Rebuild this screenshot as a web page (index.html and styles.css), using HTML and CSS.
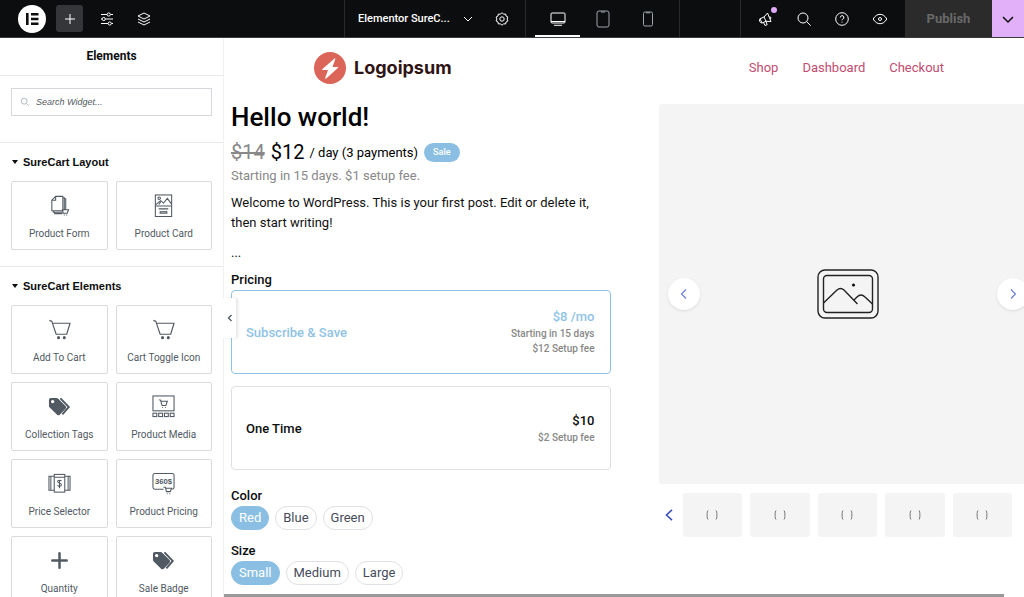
FILE: index.html
```html
<!DOCTYPE html>
<html lang="en">
<head>
<meta charset="utf-8">
<title>Elementor SureCart</title>
<link rel="stylesheet" href="styles.css">
</head>
<body>
<svg class="defs" aria-hidden="true">
  <symbol id="cart" viewBox="0 0 24 24"><path d="M1.500 2.500 4 3.500l4.500 13.500h11L23 5.500H5" fill="none" stroke="currentColor" stroke-width="1.200" stroke-linejoin="round"/><circle cx="11" cy="20.500" r="1.600" fill="currentColor"/><circle cx="17" cy="20.500" r="1.600" fill="currentColor"/></symbol>
  <symbol id="tags" viewBox="0 0 24 24"><path fill="currentColor" fill-rule="evenodd" d="M1 5a2 2 0 0 1 2-2h6a2 2 0 0 1 1.400.6l7.900 7.900a2 2 0 0 1 0 2.800l-6 6.200a2 2 0 0 1-2.800 0L1.500 12.700A2 2 0 0 1 1 11.300zM4.900 8.700a1.800 1.800 0 1 0 0-3.600 1.800 1.800 0 0 0 0 3.600z"/><path d="m13 3.500 8.700 9L15 20.300" fill="none" stroke="currentColor" stroke-width="2"/></symbol>
</svg>

<header class="topbar">
  <div class="tools">
    <button class="brand" aria-label="Elementor menu"><svg viewBox="0 0 28 28"><circle cx="14" cy="14" r="14" fill="#fff"/><path d="M8 8h2.600v12H8zM13 8h7.500v2.500H13zM13 12.800h7.500v2.500H13zM13 17.500h7.500V20H13z" fill="#0c0d0e"/></svg></button>
    <button class="add" aria-label="Add element"><svg class="icon" viewBox="0 0 16 16"><path d="M8 3v10M3 8h10"/></svg></button>
    <button class="tool" aria-label="Site settings"><svg class="icon" viewBox="0 0 16 16"><path d="M2 3.500h6M11.500 3.500H14M2 8h1M6.500 8H14M2 12.500h7M12.500 12.500H14"/><circle cx="9.700" cy="3.500" r="1.600"/><circle cx="4.700" cy="8" r="1.600"/><circle cx="10.700" cy="12.500" r="1.600"/></svg></button>
    <button class="tool" aria-label="Structure"><svg class="icon" viewBox="0 0 16 16"><path d="m8 2 6 3-6 3-6-3zM2 8l6 3 6-3M2 11l6 3 6-3"/></svg></button>
  </div>
  <div class="document">
    <button class="doc-name"><span>Elementor SureC...</span><svg class="icon small" viewBox="0 0 12 12"><path d="m2 4 4 4 4-4"/></svg></button>
    <button class="tool" aria-label="Page settings"><svg class="icon" viewBox="0 0 16 16"><path d="m8 1.700 1.500 1.500 2.100-.2.400 2 1.900 1-.8 2 .8 2-1.900 1-.4 2-2.100-.2L8 14.300l-1.500-1.500-2.100.2-.4-2-1.900-1 .8-2-.8-2 1.900-1 .4-2 2.100.2z"/><circle cx="8" cy="8" r="2.200"/></svg></button>
  </div>
  <div class="devices">
    <button class="device active" aria-label="Desktop"><svg class="icon" viewBox="0 0 16 16"><rect x="1" y="2" width="14" height="10" rx="1"/><path d="M1 10.500h14M4 14.300h8"/></svg></button>
    <button class="device" aria-label="Tablet"><svg class="icon" viewBox="0 0 16 18"><rect x="2" y="1" width="12" height="16" rx="2"/><path d="M6 2h4"/></svg></button>
    <button class="device" aria-label="Mobile"><svg class="icon" viewBox="0 0 16 16"><rect x="3.500" y="1" width="9" height="14" rx="1.500"/><path d="M6 1.800h4"/></svg></button>
  </div>
  <div class="actions">
    <button class="tool notice" aria-label="What's new"><svg class="icon" viewBox="0 0 16 16"><path d="M2 7.800 6 6l3.500-4L13 10.500l-5-.2-4 1.700zM6 6l2 4.300M5.500 11.500l1.500 3 2.200-.8-1.200-3.200M11.500 5.500a1.800 1.800 0 0 1 1 2.700M2 7.800C.8 9.200 1.700 12 4 12"/></svg></button>
    <button class="tool" aria-label="Finder"><svg class="icon" viewBox="0 0 16 16"><circle cx="7" cy="7" r="5"/><path d="m10.700 10.700 4 4"/></svg></button>
    <button class="tool" aria-label="Help"><svg class="icon" viewBox="0 0 16 16"><circle cx="8" cy="8" r="6.300"/><path d="M6.300 6.500a1.800 1.800 0 1 1 2.500 1.600c-.5.300-.8.600-.8 1.200M8 10.700v.9"/></svg></button>
    <button class="tool" aria-label="Preview"><svg class="icon" viewBox="0 0 16 16"><path d="M1.200 8C4.500 1.700 11.500 1.700 14.800 8 11.500 14.300 4.500 14.300 1.200 8z"/><circle cx="8" cy="8" r="1.500"/></svg></button>
  </div>
  <button class="publish">Publish</button>
  <button class="publish-more" aria-label="Save options"><svg class="icon" viewBox="0 0 16 16"><path d="m3 6 5 5 5-5"/></svg></button>
</header>

<div class="workspace">
  <aside class="panel">
    <h2 class="panel-title">Elements</h2>
    <label class="search">
      <svg viewBox="0 0 12 12"><circle cx="5" cy="5" r="3.600"/><path d="m8 8 2.500 2.500"/></svg>
      <input type="search" placeholder="Search Widget..." aria-label="Search Widget">
    </label>
    <section class="category">
      <button class="category-title">SureCart Layout</button>
      <div class="widgets">
        <button class="widget"><svg viewBox="0 0 24 24" class="line"><path d="M8 2.500h7.500v15H4V6.500zM8 2.500v4H4M15.500 4h1.500v13M17 5h1.500v11M5.500 17.500v1.500H15M7 19v1.500h8M15 16.500h6.500L20 20h-4zM17 22.500v-1M19.500 22.500v-1"/></svg>Product Form</button>
        <button class="widget"><svg viewBox="0 0 24 24" class="line"><rect x="3.500" y="1" width="17" height="22.500"/><path d="M3.500 12.500h17M4 11l5-4 3 2.500 4-5 4.500 6M7 15.500h10M7 11l2-2.500"/><circle cx="7.500" cy="4.500" r="1.300"/><rect x="8.500" y="18.500" width="7" height="1.500"/></svg>Product Card</button>
      </div>
    </section>
    <section class="category">
      <button class="category-title">SureCart Elements</button>
      <div class="widgets">
        <button class="widget"><svg><use href="#cart"/></svg>Add To Cart</button>
        <button class="widget"><svg><use href="#cart"/></svg>Cart Toggle Icon</button>
        <button class="widget"><svg><use href="#tags"/></svg>Collection Tags</button>
        <button class="widget"><svg viewBox="0 0 24 24" class="line"><rect x="1" y="1" width="22" height="15.500"/><path d="m7.500 5 1.500.5L10.500 11h4l1.500-4.500H9.500M11 12.500v.8M14 12.500v.8"/><rect x="1" y="19" width="4" height="3.500"/><rect x="7" y="19" width="4" height="3.500"/><rect x="13" y="19" width="4" height="3.500"/><rect x="19" y="19" width="4" height="3.500"/></svg>Product Media</button>
        <button class="widget"><svg viewBox="0 0 24 24" class="line"><rect x="6.500" y="2.500" width="11" height="18.500"/><path d="M6.500 4.500H1v14.500h5.500M3 4.500V19M17.500 4.500H23V19h-5.500M21 4.500V19M6.500 5.500h11M14 9.500c-.5-1.200-4-1.200-4 .5s4 1.300 4 3.300-3.500 2-4 .5M12 8v9"/></svg>Price Selector</button>
        <button class="widget"><svg viewBox="0 0 24 24" class="line"><path d="M12 18H3a2 2 0 0 1-2-2V3.500a2 2 0 0 1 2-2h18a2 2 0 0 1 2 2V16a2 2 0 0 1-2 2M12 16h2l1 4.500h4l1.500-3.500H14M16 22.500v.8M18.500 22.500v.8"/><text x="3" y="13">360$</text></svg>Product Pricing</button>
        <button class="widget"><svg viewBox="0 0 24 24"><path d="M12 4.500v15M4.500 12h15" stroke="currentColor" stroke-width="2.600" stroke-linecap="round"/></svg>Quantity</button>
        <button class="widget"><svg><use href="#tags"/></svg>Sale Badge</button>
      </div>
    </section>
  </aside>

  <div class="preview">
    <button class="collapse" aria-label="Collapse panel"><svg viewBox="0 0 8 8"><path d="M5.500 1 2.500 4l3 3"/></svg></button>
    <div class="canvas">
      <div class="page">
        <div class="site-header">
          <a class="logo" href="#"><svg viewBox="0 0 32 32"><circle cx="16" cy="16" r="16" fill="#dc6559"/><path d="M20.500 6.500 8.500 17c-.5.500-.2 1 .5 1h5l-2.800 8c-.2.800.4 1 1 .5L23.800 16c.5-.5.200-1-.5-1h-4.800l2.800-7.900c.2-.8-.3-1-.8-.6z" fill="#fff"/></svg><span>Logoipsum</span></a>
          <nav class="nav"><a href="#">Shop</a><a href="#">Dashboard</a><a href="#">Checkout</a></nav>
        </div>
        <main class="product">
          <div class="details">
            <h1>Hello world!</h1>
            <div class="price"><del>$14</del><span class="amount">$12</span><span class="interval">/ day (3 payments)</span><span class="sale">Sale</span></div>
            <p class="terms">Starting in 15 days. $1 setup fee.</p>
            <p class="copy">Welcome to WordPress. This is your first post. Edit or delete it, then start writing!</p>
            <p class="more">...</p>
            <h3>Pricing</h3>
            <div class="plans">
              <button class="plan selected"><span class="plan-name">Subscribe &amp; Save</span><span class="plan-cost"><b>$8 /mo</b><small>Starting in 15 days</small><small>$12 Setup fee</small></span></button>
              <button class="plan"><span class="plan-name">One Time</span><span class="plan-cost"><b>$10</b><small>$2 Setup fee</small></span></button>
            </div>
            <h3>Color</h3>
            <div class="pills"><button class="pill on">Red</button><button class="pill">Blue</button><button class="pill">Green</button></div>
            <h3>Size</h3>
            <div class="pills"><button class="pill on">Small</button><button class="pill">Medium</button><button class="pill">Large</button></div>
          </div>
          <div class="gallery">
            <div class="slide">
              <button class="arrow" aria-label="Previous image"><svg viewBox="0 0 12 12"><path d="M8 1.500 3.500 6 8 10.500"/></svg></button>
              <svg class="placeholder" viewBox="0 0 62 50"><rect x="1" y="1" width="60" height="48" rx="7"/><rect x="6.500" y="6.500" width="49" height="37" rx="3.500"/><path d="M6.500 34 20 21q3.500-3 7 0l13.500 14M37 31l3-3q4-4 8 0l7.500 7"/><circle cx="36.500" cy="16" r="1.600"/></svg>
              <button class="arrow" aria-label="Next image"><svg viewBox="0 0 12 12"><path d="M4 1.500 8.500 6 4 10.500"/></svg></button>
            </div>
            <div class="thumbs">
              <button class="thumb-nav" aria-label="Previous thumbnails"><svg viewBox="0 0 12 12"><path d="M9 .8 3.500 6 9 11.200"/></svg></button>
              <button class="thumb" aria-label="Image 1"><svg viewBox="0 0 12 10"><path d="M2 .5C.8 1 .8 9 2 9.500M10 .5c1.200.5 1.200 8.500 0 9"/></svg></button>
              <button class="thumb" aria-label="Image 2"><svg viewBox="0 0 12 10"><path d="M2 .5C.8 1 .8 9 2 9.500M10 .5c1.200.5 1.200 8.500 0 9"/></svg></button>
              <button class="thumb" aria-label="Image 3"><svg viewBox="0 0 12 10"><path d="M2 .5C.8 1 .8 9 2 9.500M10 .5c1.200.5 1.200 8.500 0 9"/></svg></button>
              <button class="thumb" aria-label="Image 4"><svg viewBox="0 0 12 10"><path d="M2 .5C.8 1 .8 9 2 9.500M10 .5c1.200.5 1.200 8.500 0 9"/></svg></button>
              <button class="thumb" aria-label="Image 5"><svg viewBox="0 0 12 10"><path d="M2 .5C.8 1 .8 9 2 9.500M10 .5c1.200.5 1.200 8.500 0 9"/></svg></button>
            </div>
          </div>
        </main>
      </div>
    </div>
    <div class="scrollbar"><div class="scroll-thumb"></div></div>
  </div>
</div>
</body>
</html>
```
FILE: styles.css
```css
* { box-sizing: border-box; }
body {
  margin: 0;
  height: 100vh;
  display: flex;
  flex-direction: column;
  overflow: hidden;
  font-family: Roboto, "Liberation Sans", sans-serif;
  color: #0c0d0e;
  background: #fff;
}
button { font: inherit; color: inherit; border: 0; padding: 0; margin: 0; background: none; }
h1, h2, h3, p { margin: 0; }
a { text-decoration: none; }
svg { flex: none; }
.defs { display: none; }

/* Top bar */
.topbar {
  flex: none;
  display: flex;
  height: 38px;
  background: #0c0d0e;
  color: #fff;
  border-bottom: 1px solid #3a3b3d;
}
.topbar > div { display: flex; align-items: center; }
.icon { width: 16px; height: 16px; display: block; fill: none; stroke: currentColor; stroke-width: 1; }
.icon.small { width: 12px; height: 12px; }
.tools { flex: 1; padding-left: 18px; }
.brand svg { width: 28px; height: 28px; display: block; }
.add {
  width: 27px;
  height: 27px;
  margin: 0 10px;
  display: grid;
  place-items: center;
  background: #35363a;
  border-radius: 3px;
}
.tool { width: 27px; height: 27px; display: grid; place-items: center; }
.tools .tool + .tool { margin-left: 10px; }
.document { width: 182px; border: 1px solid #2a2b2d; border-width: 0 1px; padding: 0 10px 0 13px; justify-content: space-between; }
.doc-name { display: flex; align-items: center; gap: 12px; font-size: 11px; font-weight: 500; }
.devices { width: 154px; padding-left: 9px; border-right: 1px solid #2a2b2d; }
.device { width: 45px; align-self: stretch; display: grid; place-items: center; color: #9da5ae; }
.device .icon { height: 18px; }
.device.active { color: #fff; box-shadow: inset 0 -2px #fff; }
.actions { margin-left: 60px; width: 165px; padding-left: 11px; gap: 11px; border-left: 1px solid #2a2b2d; }
.notice { position: relative; }
.notice::after {
  content: "";
  position: absolute;
  top: 2px;
  right: 2px;
  width: 6px;
  height: 6px;
  border-radius: 50%;
  background: #e0aaf8;
}
.publish { width: 87px; background: #2b2b2b; color: #696969; font-size: 13px; font-weight: 700; }
.publish-more { width: 32px; display: grid; place-items: center; background: #e2b0f8; color: #0c0d0e; }
.publish-more .icon { stroke-width: 1.500; }

/* Widget panel */
.workspace { flex: 1; display: flex; min-height: 0; }
.panel { width: 224px; flex: none; overflow: hidden; border-right: 1px solid #f0f0f0; }
.panel-title { height: 38px; font-size: 12px; line-height: 37px; text-align: center; border-bottom: 1px solid #e8e8ea; }
.search {
  display: flex;
  align-items: center;
  gap: 6px;
  height: 28px;
  margin: 12px 11px 26px;
  padding: 0 8px;
  border: 1px solid #d5d8dc;
}
.search svg { width: 10px; height: 10px; fill: none; stroke: #a4acb5; }
.search input {
  flex: 1;
  min-width: 0;
  border: 0;
  padding: 0;
  outline: 0;
  background: none;
  font: italic 9px "Liberation Sans", Arial, sans-serif;
}
.search input::placeholder { color: #515962; opacity: 1; }
.category { border-top: 1px solid #e8e8ea; padding: 0 11px 16px; }
.category-title {
  display: flex;
  align-items: center;
  gap: 5px;
  height: 38px;
  font: bold 11px "Liberation Sans", Arial, sans-serif;
}
.category-title::before { content: ""; margin-left: 1px; border: 3px solid transparent; border-top: 4px solid #0c0d0e; border-bottom: 0; }
.widgets { display: grid; grid-template-columns: 1fr 1fr; gap: 8px; }
.widget {
  display: flex;
  flex-direction: column;
  align-items: center;
  gap: 10px;
  height: 69px;
  padding-top: 12px;
  border: 1px solid #d9dbdf;
  border-radius: 2px;
  color: #515962;
  font-size: 10px;
  line-height: 14px;
}
.widget svg { width: 23px; height: 23px; }
.widget .line { fill: none; stroke: currentColor; stroke-width: 1.100; }
.widget text { font: bold 8px "Liberation Sans", sans-serif; fill: currentColor; stroke: none; }

/* Preview */
.preview { flex: 1; min-width: 0; display: flex; flex-direction: column; position: relative; }
.collapse {
  position: absolute;
  z-index: 1;
  left: -1px;
  top: 260px;
  width: 13px;
  height: 40px;
  display: grid;
  place-items: center;
  background: #fff;
  border-radius: 0 2px 2px 0;
  box-shadow: 2px 0 3px #0000001a;
}
.collapse svg { width: 8px; height: 8px; fill: none; stroke: #515962; stroke-width: 1.300; }
.canvas { flex: 1; min-height: 0; overflow: hidden; }
.page { min-width: 820px; padding: 0 6px 0 7px; }
.scrollbar { flex: none; height: 3px; padding-right: 20px; }
.scroll-thumb { height: 3px; background: #999; }
.site-header { height: 66px; padding: 0 94px 7px 83px; display: flex; align-items: center; justify-content: space-between; }
.logo { display: flex; align-items: center; gap: 8px; color: #2f1414; font: bold 18px Inter, sans-serif; }
.logo svg { width: 32px; height: 32px; }
.nav { display: flex; gap: 24px; font-size: 13px; }
.nav a { color: #c14c70; }

.product { display: grid; grid-template-columns: minmax(0, 1fr) minmax(0, 1fr); gap: 48px; align-items: start; }
h1 { font-size: 26px; line-height: 26px; font-weight: 500; color: #000; }
.price { display: flex; align-items: center; height: 24px; margin-top: 10px; font-size: 20px; color: #000; }
.price del { color: #888; }
.amount { margin: 0 5px 0 6px; }
.interval { font-size: 13px; margin-right: 6px; }
.sale { height: 19px; padding: 0 9px; border-radius: 10px; background: #8abfe3; color: #fff; font-size: 9px; line-height: 19px; font-weight: 500; }
.details p { font-size: 13px; line-height: 20px; color: #111; }
.details .terms { margin-top: 2px; color: #888; }
.details .copy { margin-top: 7px; }
.details .more { margin: 10px 0 8px; }
h3 { font-size: 13px; line-height: 18px; font-weight: 500; }
.plans { display: grid; gap: 12px; margin: 1px 0 17px; }
.plan {
  display: flex;
  align-items: center;
  justify-content: space-between;
  height: 84px;
  padding: 0 15px 0 14px;
  border: 1px solid #dfe0e6;
  border-radius: 4px;
  font-size: 13px;
  font-weight: 500;
}
.plan.selected { border-color: #8fc3e6; color: #8fc3e6; }
.plan-cost { display: flex; flex-direction: column; text-align: right; }
.plan-cost b { font-weight: 500; line-height: 18px; }
.plan-cost small { font-size: 10px; line-height: 15px; color: #888; }
.pills { display: flex; gap: 6px; margin: 1px 0 12px; }
.pill { height: 24px; padding: 0 7px; border: 1px solid #dfe0e6; border-radius: 12px; font-size: 13px; line-height: 22px; color: #464b5c; }
.pill.on { background: #8abfe3; border-color: #8abfe3; color: #fff; }

.slide {
  display: flex;
  align-items: center;
  justify-content: space-between;
  aspect-ratio: 1;
  padding: 0 9px;
  border-radius: 3px;
  background: #f4f4f4;
}
.arrow { width: 32px; height: 32px; display: grid; place-items: center; border-radius: 50%; background: #fff; box-shadow: 0 1px 3px #0000001a; }
.arrow svg, .thumb-nav svg { width: 12px; height: 12px; fill: none; stroke: #6478e0; stroke-width: 1.100; }
.placeholder { width: 62px; height: 50px; fill: none; stroke: #222; stroke-width: 1.400; }
.placeholder circle { fill: #111; stroke: none; }
.thumbs { display: flex; gap: 8px; margin: 9px 26px 0 4px; }
.thumb-nav { width: 12px; display: grid; place-items: center; }
.thumb-nav svg { stroke: #3a50b8; stroke-width: 1.600; }
.thumb { flex: 1; height: 44px; display: grid; place-items: center; background: #f4f4f4; border-radius: 3px; }
.thumb svg { width: 12px; height: 10px; fill: none; stroke: #777; }
```
